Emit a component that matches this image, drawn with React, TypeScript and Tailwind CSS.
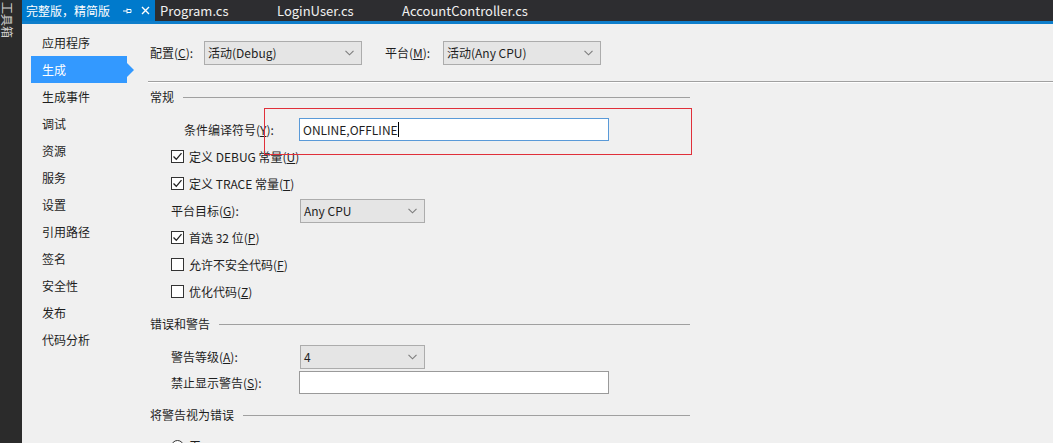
import React from 'react';

const font = "font-['Noto_Sans_CJK_SC','Microsoft_YaHei',sans-serif]";

function Chevron() {
  return (
    <svg width="9" height="6" viewBox="0 0 9 6" className="shrink-0">
      <path d="M0.5 0.8 L4.5 4.8 L8.5 0.8" fill="none" stroke="#7c7c7c" strokeWidth="1.1" />
    </svg>
  );
}

function Select({ className, text }: { className: string; text: string }) {
  return (
    <div className={`flex items-center justify-between h-[24px] border border-[#acacac] bg-[#e5e5e5] pl-[3px] pr-[7px] ${className}`}>
      <span>{text}</span>
      <Chevron />
    </div>
  );
}

function Check({ checked }: { checked: boolean }) {
  return (
    <div className="w-[13px] h-[13px] border border-[#333333] bg-white flex items-center justify-center shrink-0">
      {checked && (
        <svg width="11" height="11" viewBox="0 0 11 11">
          <path d="M1.5 5.5 L4.3 8.3 L9.5 2.2" fill="none" stroke="#222" strokeWidth="1.3" />
        </svg>
      )}
    </div>
  );
}

function CheckRow({ checked, children }: { checked: boolean; children: React.ReactNode }) {
  return (
    <div className="flex items-center h-[27px] pl-[23px] gap-[5px]">
      <Check checked={checked} />
      <span>{children}</span>
    </div>
  );
}

function Section({ title }: { title: string }) {
  return (
    <div className="flex items-center h-[16px] w-[542px] pl-[2px]">
      <span>{title}</span>
      <div className="ml-[9px] flex-1 h-px bg-[#a0a0a0]" />
    </div>
  );
}

const navItems = ['应用程序', '生成', '生成事件', '调试', '资源', '服务', '设置', '引用路径', '签名', '安全性', '发布', '代码分析'];

export default function App() {
  return (
    <div className={`w-[1053px] h-[443px] flex overflow-hidden text-[12px] text-[#1e1e1e] ${font}`}>
      <div className="w-[22px] h-full bg-[#2b2b2b] shrink-0 pt-[2px] pl-[1px]">
        <div className="[writing-mode:vertical-rl] [text-orientation:sideways] text-[#cfcfcf] text-[12px] leading-[13px]">工具箱</div>
      </div>
      <div className="flex-1 flex flex-col">
        <div className="h-[21px] shrink-0 bg-[#2d2d30] flex items-stretch text-[#f1f1f1] text-[13px] font-['Segoe_UI','Noto_Sans_CJK_SC',sans-serif] whitespace-nowrap">
          <div className="w-[133px] bg-[#007acc] flex items-center pl-[4px] text-white">
            <span className="text-[12px] leading-[16px] font-['Noto_Sans_CJK_SC',sans-serif]">完整版，精简版</span>
            <svg width="10" height="10" viewBox="0 0 10 10" className="ml-[12px]">
              <path d="M1 5 H5 M5 2.5 V7.5 M5 3.5 H9 M5 6.5 H9 M9 3.5 V6.5" fill="none" stroke="#ffffff" strokeWidth="1" />
            </svg>
            <svg width="9" height="9" viewBox="0 0 9 9" className="ml-[9px]">
              <path d="M1 1 L8 8 M8 1 L1 8" fill="none" stroke="#ffffff" strokeWidth="1.4" />
            </svg>
          </div>
          <div className="w-[117px] flex items-center pl-[5px]">Program.cs</div>
          <div className="w-[125px] flex items-center pl-[5px]">LoginUser.cs</div>
          <div className="w-[130px] flex items-center pl-[5px]">AccountController.cs</div>
        </div>
        <div className="h-[3px] shrink-0 bg-[#0e7ecb]" />
        <div className="flex-1 min-h-0 bg-[#f0f0f0] flex">
          <div className="w-[126px] shrink-0 pt-[5px] pl-[9px]">
            {navItems.map((item) =>
              item === '生成' ? (
                <div key={item} className="flex items-center h-[27px]">
                  <div className="w-[96px] h-full bg-[#3399ff] text-white flex items-center pl-[11px]">{item}</div>
                  <svg width="7" height="14" viewBox="0 0 7 14">
                    <path d="M0 0 L7 7 L0 14 Z" fill="#3399ff" />
                  </svg>
                </div>
              ) : (
                <div key={item} className="h-[27px] flex items-center pl-[11px]">{item}</div>
              )
            )}
          </div>
          <div className="flex-1 relative">
            <div className="flex items-center h-[24px] mt-[17px] pl-[2px]">
              <span className="w-[54px]">配置(<u>C</u>):</span>
              <Select className="w-[158px]" text="活动(Debug)" />
              <span className="ml-[23px] w-[58px]">平台(<u>M</u>):</span>
              <Select className="w-[158px]" text="活动(Any CPU)" />
            </div>
            <div className="mt-[16px] h-px bg-[#a0a0a0]" />
            <div className="h-px bg-white" />
            <div className="mt-[6px]">
              <Section title="常规" />
            </div>
            <div className="flex items-center h-[23px] mt-[13px] pl-[36px]">
              <span className="w-[115px]">条件编译符号(<u>Y</u>):</span>
              <div className="w-[310px] h-[23px] bg-white border border-[#5a9ad8] flex items-center pl-[3px]">
                <span>ONLINE,OFFLINE</span>
                <span className="w-px h-[15px] bg-black" />
              </div>
            </div>
            <div className="mt-[2px]">
              <CheckRow checked>定义 DEBUG 常量(<u>U</u>)</CheckRow>
              <CheckRow checked>定义 TRACE 常量(<u>T</u>)</CheckRow>
              <div className="flex items-center h-[27px] pl-[23px]">
                <span className="w-[129px]">平台目标(<u>G</u>):</span>
                <Select className="w-[125px]" text="Any CPU" />
              </div>
              <CheckRow checked>首选 32 位(<u>P</u>)</CheckRow>
              <CheckRow checked={false}>允许不安全代码(<u>F</u>)</CheckRow>
              <CheckRow checked={false}>优化代码(<u>Z</u>)</CheckRow>
            </div>
            <div className="mt-[11px]">
              <Section title="错误和警告" />
            </div>
            <div className="flex items-center h-[24px] mt-[13px] pl-[23px]">
              <span className="w-[129px]">警告等级(<u>A</u>):</span>
              <Select className="w-[125px]" text="4" />
            </div>
            <div className="flex items-center h-[23px] mt-[2px] pl-[23px]">
              <span className="w-[128px]">禁止显示警告(<u>S</u>):</span>
              <div className="w-[310px] h-[23px] bg-white border border-[#9a9a9a]" />
            </div>
            <div className="mt-[13px]">
              <Section title="将警告视为错误" />
            </div>
            <div className="flex items-center h-[16px] mt-[15px] pl-[23px] gap-[5px]">
              <div className="w-[13px] h-[13px] rounded-full border border-[#333333] bg-white" />
              <span>无</span>
            </div>
            <div className="absolute left-[116px] top-[84px] w-[428px] h-[47px] border border-solid border-[#e0303a] pointer-events-none" />
          </div>
        </div>
      </div>
    </div>
  );
}
